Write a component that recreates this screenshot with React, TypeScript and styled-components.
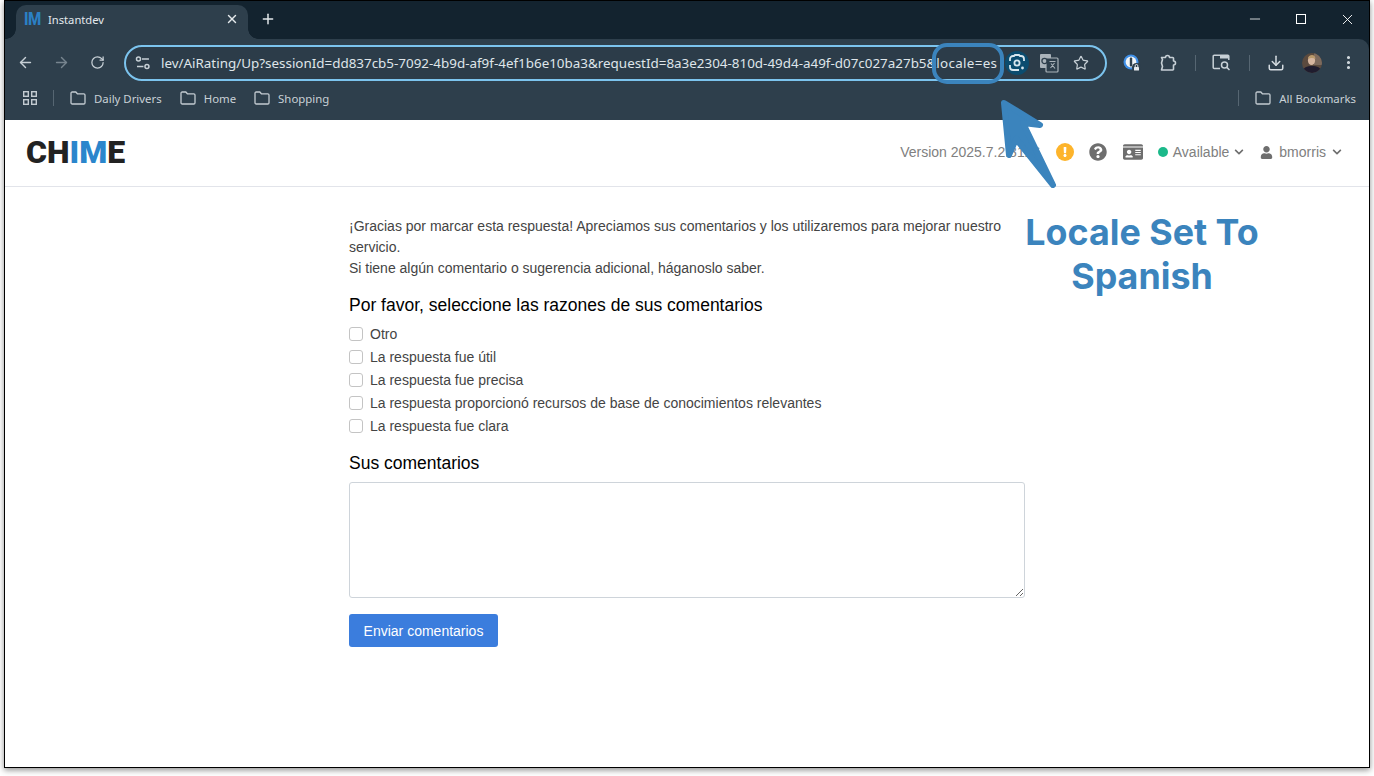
import React from 'react';
import styled, { createGlobalStyle } from 'styled-components';
import { ArrowLeft, ArrowRight, RotateCw, X, Plus, Star, Download, EllipsisVertical, Minus } from 'lucide-react';
import { FaChevronDown, FaExclamation, FaIdCard, FaQuestionCircle, FaUser } from 'react-icons/fa';

const REASONS = [
  'Otro',
  'La respuesta fue útil',
  'La respuesta fue precisa',
  'La respuesta proporcionó recursos de base de conocimientos relevantes',
  'La respuesta fue clara',
];

const FolderIcon = () => (
  <svg width="16" height="14" viewBox="0 0 16 14" fill="none" stroke="#c3cbd1" strokeWidth="1.3">
    <path d="M1 2.2c0-.7.5-1.2 1.2-1.2h3.6l1.6 1.8h6.4c.7 0 1.2.5 1.2 1.2v7.8c0 .7-.5 1.2-1.2 1.2H2.2c-.7 0-1.2-.5-1.2-1.2z" />
  </svg>
);

const TuneIcon = () => (
  <svg width="16" height="14" viewBox="0 0 16 14" fill="none" stroke="#c7d0d6" strokeWidth="1.5">
    <circle cx="3.5" cy="3" r="2" />
    <path d="M7 3h7M2 10.5h6.5" />
    <circle cx="12" cy="10.500" r="2" />
  </svg>
);

const LensIcon = () => (
  <svg width="18" height="18" viewBox="0 0 18 18" fill="none" stroke="#d7e6ee" strokeWidth="1.8">
    <path d="M2 7V5a3 3 0 0 1 3-3h1l1-1h4l1 1h1a3 3 0 0 1 3 3v2M2 11v2a3 3 0 0 0 3 3h6" />
    <circle cx="9" cy="9" r="2.6" />
    <circle cx="14.5" cy="14" r="1.4" fill="#d7e6ee" stroke="none" />
  </svg>
);

const TranslateIcon = () => (
  <svg width="20" height="20" viewBox="0 0 20 20">
    <rect x="1" y="1" width="11" height="14" rx="1" fill="#aab3ba" />
    <rect x="7" y="5" width="12" height="14" rx="1" fill="#2e3f4c" stroke="#aab3ba" strokeWidth="1.2" />
    <circle cx="5.5" cy="8" r="2.6" fill="none" stroke="#2e3f4c" strokeWidth="1.3" />
    <path d="M10.5 8.5h6M13.5 8v1M11.5 15l4-5M12 10.5l4 5" stroke="#aab3ba" strokeWidth="1.1" fill="none" />
  </svg>
);

const PasswordIcon = () => (
  <svg width="20" height="20" viewBox="0 0 20 20">
    <circle cx="9" cy="9" r="7.5" fill="#3f8fe6" />
    <circle cx="9" cy="9" r="5.4" fill="#f2f5f7" />
    <rect x="7.8" y="4.5" width="2.4" height="9" rx="1" fill="#2e3f4c" />
    <circle cx="14.5" cy="14.5" r="4.6" fill="#2e3f4c" />
    <rect x="12" y="14" width="5" height="3.600" rx=".6" fill="#e6eaed" />
    <path d="M13.2 14v-1.2a1.3 1.3 0 0 1 2.6 0V14" stroke="#e6eaed" fill="none" />
  </svg>
);

const ExtensionIcon = () => (
  <svg width="18" height="18" viewBox="0 0 18 18" fill="none" stroke="#c7d0d6" strokeWidth="1.6" strokeLinejoin="round">
    <path d="M2.500 3.500H6.500a2 2 0 0 1 4 0h3.300a.7.7 0 0 1 .7.700V7a2 2 0 0 1 0 4v4.300a.7.7 0 0 1-.7.700H2.500l1-3.500-1-3.500 1-3.500z" />
  </svg>
);

const TabSearchIcon = () => (
  <svg width="20" height="18" viewBox="0 0 20 18" fill="none" stroke="#c7d0d6" strokeWidth="1.5">
    <path d="M8 14.5H2.2a1 1 0 0 1-1-1V2.2a1 1 0 0 1 1-1h13.600a1 1 0 0 1 1 1V6" />
    <path d="M8 1.500h8.500V4.500H8z" fill="#c7d0d6" stroke="none" />
    <circle cx="12.5" cy="11" r="3" />
    <path d="M14.800 13.400 17.500 16" />
  </svg>
);

const AppsIcon = () => (
  <svg width="16" height="16" viewBox="0 0 16 16" fill="none" stroke="#c3cbd1" strokeWidth="1.4">
    <rect x="1.700" y="1.700" width="4.600" height="4.600" />
    <rect x="9.700" y="1.700" width="4.600" height="4.600" />
    <rect x="1.700" y="9.700" width="4.600" height="4.600" />
    <rect x="9.700" y="9.700" width="4.600" height="4.600" />
  </svg>
);

const AvatarIcon = () => (
  <svg width="20" height="20" viewBox="0 0 20 20">
    <clipPath id="avatar-clip"><circle cx="10" cy="10" r="10" /></clipPath>
    <g clipPath="url(#avatar-clip)">
      <rect width="20" height="20" fill="#5b4a3e" />
      <rect x="12" width="8" height="12" fill="#7d6a5d" />
      <path d="M0 20c1-6 5-7 10-7s9 1 10 7z" fill="#1f1c2e" />
      <ellipse cx="9.5" cy="7.500" rx="3.600" ry="4.600" fill="#d6b6a0" />
      <path d="M6 6c0-3 2-4 4-4s3.500 1.500 3.400 4c-2-1.500-5-1.500-7.400 0z" fill="#b99a6c" />
    </g>
  </svg>
);

const CalloutArrow = () => (
  <svg width="70" height="100" viewBox="0 0 70 100" fill="#3b84bd" stroke="#3b84bd" strokeWidth="6" strokeLinejoin="round" strokeLinecap="round">
    <path d="M5 7 L41 29 L24 27 L54 89 L17 43 L10 59 Z" />
  </svg>
);

export default function App() {
  return (
    <>
      <GlobalStyle />
      <Screen>
        <BrowserWindow>
          <TabStrip>
            <Tab>
              <Favicon>IM</Favicon>
              <TabTitle>Instantdev</TabTitle>
              <X size={14} strokeWidth={2.4} color="#e4e9ec" />
            </Tab>
            <NewTab><Plus size={16} strokeWidth={2.2} color="#e4e9ec" /></NewTab>
            <WindowControls>
              <Minus size={16} strokeWidth={1.2} color="#fff" />
              <MaximizeBox />
              <X size={17} strokeWidth={1.3} color="#fff" />
            </WindowControls>
          </TabStrip>

          <Toolbar>
            <NavButton><ArrowLeft size={17} color="#c7d0d6" /></NavButton>
            <NavButton><ArrowRight size={17} color="#77858f" /></NavButton>
            <NavButton><RotateCw size={15} color="#c7d0d6" /></NavButton>
            <Omnibox>
              <TuneIcon />
              <UrlText>
                lev/AiRating/Up?sessionId=dd837cb5-7092-4b9d-af9f-4ef1b6e10ba3&amp;requestId=8a3e2304-810d-49d4-a49f-d07c027a27b5&amp;
                <LocaleParam>locale=es</LocaleParam>
              </UrlText>
              <LensBadge><LensIcon /></LensBadge>
              <OmniIcon><TranslateIcon /></OmniIcon>
              <OmniIcon><Star size={16} color="#c7d0d6" strokeWidth={1.8} /></OmniIcon>
            </Omnibox>
            <ToolIcons>
              <ToolSlot><PasswordIcon /></ToolSlot>
              <ToolSlot><ExtensionIcon /></ToolSlot>
              <ToolDivider />
              <ToolSlot><TabSearchIcon /></ToolSlot>
              <ToolDivider />
              <ToolSlot><Download size={18} color="#d5dce1" /></ToolSlot>
              <ToolSlot><AvatarIcon /></ToolSlot>
              <ToolSlot><EllipsisVertical size={17} color="#d5dce1" strokeWidth={2.4} /></ToolSlot>
            </ToolIcons>
          </Toolbar>

          <BookmarksBar>
            <AppsIcon />
            <LeadDivider />
            <Bookmark><FolderIcon />Daily Drivers</Bookmark>
            <Bookmark><FolderIcon />Home</Bookmark>
            <Bookmark><FolderIcon />Shopping</Bookmark>
            <AllBookmarks>
              <BarDivider />
              <Bookmark><FolderIcon />All Bookmarks</Bookmark>
            </AllBookmarks>
          </BookmarksBar>

          <AppHeader>
            <Logo>CH<LogoAccent>IM</LogoAccent>E</Logo>
            <HeaderTools>
              <VersionText>Version 2025.7.2.8126</VersionText>
              <WarningBadge><FaExclamation size={10} color="#fff" /></WarningBadge>
              <FaQuestionCircle size={18} color="#6e6e6e" />
              <FaIdCard size={20} color="#6e6e6e" />
              <StatusMenu><StatusDot />Available<FaChevronDown size={10} color="#6e6e6e" /></StatusMenu>
              <UserMenu><FaUser size={13} color="#6e6e6e" />bmorris<FaChevronDown size={10} color="#6e6e6e" /></UserMenu>
            </HeaderTools>
          </AppHeader>

          <Main>
            <Intro>
              ¡Gracias por marcar esta respuesta! Apreciamos sus comentarios y los utilizaremos para mejorar nuestro servicio.
              <br />
              Si tiene algún comentario o sugerencia adicional, háganoslo saber.
            </Intro>
            <SectionTitle>Por favor, seleccione las razones de sus comentarios</SectionTitle>
            <ReasonList>
              {REASONS.map((reason) => (
                <ReasonRow key={reason}>
                  <ReasonCheck type="checkbox" />
                  {reason}
                </ReasonRow>
              ))}
            </ReasonList>
            <CommentsTitle>Sus comentarios</CommentsTitle>
            <CommentBox />
            <SubmitButton>Enviar comentarios</SubmitButton>
          </Main>

          <LocaleHighlight />
          <ArrowOverlay><CalloutArrow /></ArrowOverlay>
          <Callout>Locale Set To<br />Spanish</Callout>
        </BrowserWindow>
      </Screen>
    </>
  );
}

const GlobalStyle = createGlobalStyle`
  html, body {
    margin: 0;
    height: 100%;
    overflow: hidden;
    background: #fff;
  }
  * { box-sizing: border-box; }
`;

const Screen = styled.div`
  width: 1374px;
  height: 776px;
  padding: 0 4px;
`;

const BrowserWindow = styled.div`
  position: relative;
  width: 1366px;
  height: 768px;
  border: 1px solid #000;
  display: flex;
  flex-direction: column;
  background: #13232f;
  box-shadow: 0 2px 6px rgba(0, 0, 0, 0.45);
`;

const TabStrip = styled.div`
  height: 38px;
  flex-shrink: 0;
  display: flex;
  align-items: flex-end;
  padding-left: 11px;
`;

const Tab = styled.div`
  position: relative;
  width: 232px;
  height: 34px;
  background: #2e3f4c;
  border-radius: 10px 10px 0 0;
  display: flex;
  align-items: center;
  padding: 0 9px 6px 8px;
  color: #e4e9ec;

  &::before,
  &::after {
    content: '';
    position: absolute;
    bottom: 0;
    width: 10px;
    height: 10px;
  }

  &::before {
    left: -10px;
    background: radial-gradient(circle at 0 0, transparent 9.5px, #2e3f4c 10px);
  }

  &::after {
    right: -10px;
    background: radial-gradient(circle at 100% 0, transparent 9.5px, #2e3f4c 10px);
  }
`;

const Favicon = styled.span`
  display: inline-block;
  width: 24px;
  font: 800 18px/1 'Roboto', sans-serif;
  color: #2b80c4;
  letter-spacing: -0.5px;
  transform: scaleX(0.84);
  transform-origin: left center;
`;

const TabTitle = styled.span`
  flex: 1;
  font: 11.2px 'Noto Sans', sans-serif;
`;

const NewTab = styled.div`
  width: 40px;
  height: 34px;
  padding-bottom: 6px;
  display: flex;
  align-items: center;
  justify-content: center;
`;

const WindowControls = styled.div`
  margin-left: auto;
  align-self: stretch;
  display: flex;
  align-items: center;
  gap: 30px;
  padding: 0 13px 2px 0;
`;

const MaximizeBox = styled.span`
  width: 10px;
  height: 10px;
  border: 1px solid #fff;
  margin: 0 3px;
`;

const Toolbar = styled.div`
  height: 47px;
  flex-shrink: 0;
  background: #2e3f4c;
  border-radius: 0 10px 0 0;
  display: flex;
  align-items: center;
  padding-left: 2px;
`;

const NavButton = styled.div`
  width: 36px;
  height: 36px;
  display: flex;
  align-items: center;
  justify-content: center;
`;

const Omnibox = styled.div`
  width: 983px;
  height: 36px;
  margin-left: 9px;
  border: 2px solid #7cc4ee;
  border-radius: 18px;
  display: flex;
  align-items: center;
  padding: 0 8px 0 9px;
  background: #2c3c49;
`;

const UrlText = styled.div`
  width: 840px;
  margin-left: 10px;
  overflow: hidden;
  white-space: nowrap;
  font: 13.42px 'Noto Sans', sans-serif;
  color: #dfe5e9;
`;

const LocaleParam = styled.span`
  letter-spacing: 0.3px;
`;

const LensBadge = styled.div`
  width: 24px;
  height: 24px;
  margin-left: 8px;
  border-radius: 50%;
  background: #0b4c6f;
  display: flex;
  align-items: center;
  justify-content: center;
`;

const OmniIcon = styled.div`
  width: 32px;
  display: flex;
  justify-content: center;
  margin-left: 4px;

  &:last-child {
    margin-left: 0;
  }
`;

const ToolIcons = styled.div`
  display: flex;
  align-items: center;
  margin-left: 7px;
`;

const ToolSlot = styled.div`
  width: 36px;
  height: 36px;
  display: flex;
  align-items: center;
  justify-content: center;
`;

const ToolDivider = styled.span`
  width: 1px;
  height: 16px;
  margin: 0 8.5px;
  background: #566672;
`;

const BookmarksBar = styled.div`
  height: 34px;
  flex-shrink: 0;
  background: #2e3f4c;
  display: flex;
  align-items: center;
  padding: 0 13px 10px 17px;
  gap: 18px;
`;

const BarDivider = styled.span`
  width: 1px;
  height: 16px;
  background: #566672;
`;

const LeadDivider = styled(BarDivider)`
  margin: 0 -2px 0 -3px;
`;

const Bookmark = styled.div`
  display: flex;
  align-items: center;
  gap: 8px;
  font: 11.4px 'Noto Sans', sans-serif;
  color: #c9d1d6;
`;

const AllBookmarks = styled.div`
  margin-left: auto;
  display: flex;
  align-items: center;
  gap: 16px;
`;

const AppHeader = styled.header`
  height: 67px;
  flex-shrink: 0;
  background: #fff;
  border-bottom: 1px solid #e2e4ea;
  display: flex;
  align-items: center;
  justify-content: space-between;
  padding: 0 27px 2px 21px;
`;

const Logo = styled.div`
  font: 900 32px/1 'Roboto', sans-serif;
  color: #222;
  letter-spacing: 0;
`;

const LogoAccent = styled.span`
  color: #2b86cc;
`;

const HeaderTools = styled.div`
  display: flex;
  align-items: center;
  gap: 15.5px;
  font: 14px 'Liberation Sans', Arial, sans-serif;
  color: #808080;
`;

const VersionText = styled.span``;

const WarningBadge = styled.span`
  width: 18px;
  height: 18px;
  border-radius: 50%;
  background: #fdb42b;
  display: flex;
  align-items: center;
  justify-content: center;
`;

const StatusMenu = styled.div`
  display: flex;
  align-items: center;
  gap: 4.500px;
`;

const StatusDot = styled.span`
  width: 10px;
  height: 10px;
  border-radius: 50%;
  background: #1bb98a;
`;

const UserMenu = styled.div`
  display: flex;
  align-items: center;
  gap: 6px;
  margin-left: 1px;
`;

const Main = styled.main`
  flex: 1;
  padding: 29px 0 0 344px;
  background: #fff;
  color: #444;
  font: 14px/21px 'Liberation Sans', Arial, sans-serif;
`;

const Intro = styled.p`
  width: 676px;
  margin: 0 0 16px;
`;

const SectionTitle = styled.h5`
  margin: 0 0 7px;
  font: 400 17.5px/21px 'Liberation Sans', Arial, sans-serif;
  color: #000;
`;

const ReasonList = styled.div`
  display: flex;
  flex-direction: column;
`;

const ReasonRow = styled.label`
  height: 23px;
  display: flex;
  align-items: center;
  gap: 7px;
`;

const ReasonCheck = styled.input`
  appearance: none;
  width: 14px;
  height: 14px;
  margin: 0 0 2px;
  border: 1px solid #c4c4c4;
  border-radius: 3px;
  background: #fff;
`;

const CommentsTitle = styled(SectionTitle)`
  margin: 15px 0 8px;
`;

const CommentBox = styled.textarea`
  display: block;
  width: 676px;
  height: 116px;
  border: 1px solid #ced4da;
  border-radius: 3px;
  background: #fff;
`;

const SubmitButton = styled.button`
  display: block;
  margin-top: 16px;
  width: 149px;
  height: 33px;
  border: 0;
  border-radius: 3px;
  background: #3b7ddd;
  color: #fff;
  font: 14px 'Liberation Sans', Arial, sans-serif;
`;

const LocaleHighlight = styled.div`
  position: absolute;
  left: 927px;
  top: 42px;
  width: 72px;
  height: 41px;
  border: 4px solid #3b84bd;
  border-radius: 15px;
`;

const ArrowOverlay = styled.div`
  position: absolute;
  left: 994px;
  top: 95px;
  line-height: 0;
`;

const Callout = styled.div`
  position: absolute;
  left: 960px;
  top: 209px;
  width: 354px;
  text-align: center;
  font: 700 35.8px/44px 'Inter', sans-serif;
  color: #3b84bd;
`;
